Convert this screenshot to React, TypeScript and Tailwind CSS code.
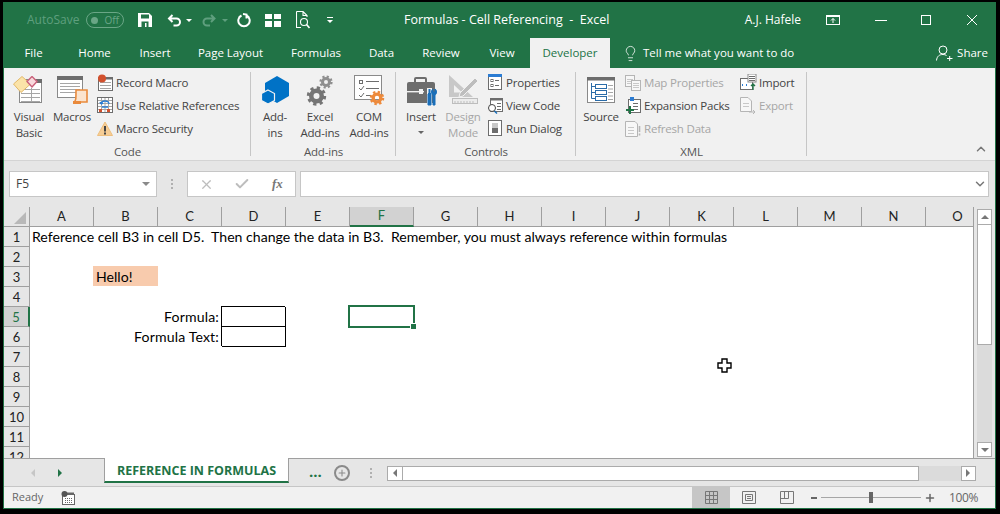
import React from 'react';
import { ChevronDown, ChevronUp, Check, Plus, X, Lightbulb } from 'lucide-react';

const uiFont = { fontFamily: '"Open Sans", "Noto Sans", sans-serif' };

const Gear = ({ cx, cy, r, color }: { cx: number; cy: number; r: number; color: string }) => {
  const c = 2 * Math.PI * (r + 0.5);
  return (
    <g>
      <circle cx={cx} cy={cy} r={r * 0.7} fill="none" stroke={color} strokeWidth={r * 0.6} />
      <circle cx={cx} cy={cy} r={r + 0.5} fill="none" stroke={color} strokeWidth={r * 0.45} strokeDasharray={`${c / 16} ${c / 16}`} />
    </g>
  );
};

const Icon = ({ w, h, className, children }: { w: number; h: number; className?: string; children: React.ReactNode }) => (
  <svg width={w} height={h} viewBox={`0 0 ${w} ${h}`} className={className} fill="none">
    {children}
  </svg>
);

const Lines = ({ x, y, w, n, gap = 4, color = '#a6a6a6' }: { x: number; y: number; w: number; n: number; gap?: number; color?: string }) => (
  <>
    {Array.from({ length: n }).map((_, i) => (
      <line key={i} x1={x} x2={x + w} y1={y + i * gap + 0.5} y2={y + i * gap + 0.5} stroke={color} />
    ))}
  </>
);

const VisualBasicIcon = () => (
  <Icon w={32} h={30}>
    <rect x="6.5" y="3.5" width="22" height="23" fill="#fff" stroke="#8a8a8a" />
    <rect x="17" y="3" width="12" height="4" fill="#6d6d6d" />
    <Lines x={8} y={13} w={19} n={4} />
    <line x1="18.5" y1="12" x2="18.5" y2="26" stroke="#a6a6a6" />
    <path d="M9 0.5 L17.5 8 L8 16.5 L0.5 8 Z" fill="#fbe3a8" stroke="#e2b869" />
    <path d="M19 0.5 L24 5.5 L19 11 L14 5.5 Z" fill="#f8d8dc" stroke="#c9607a" strokeWidth="1.4" />
  </Icon>
);

const MacrosIcon = () => (
  <Icon w={32} h={30}>
    <rect x="1.5" y="0.5" width="25" height="21" fill="#fff" stroke="#8a8a8a" />
    <rect x="1" y="0" width="26" height="4" fill="#6d6d6d" />
    <Lines x={4} y={7} w={20} n={4} gap={3} />
    <path d="M20 14 h11 v12 h-13 c2 -1 2 -3 2 -12 z" fill="#fbe4cf" stroke="#e98a3c" strokeWidth="1.6" />
    <path d="M17 28 h8 v-3 h-8 z" fill="#e98a3c" />
  </Icon>
);

const RecordIcon = () => (
  <Icon w={16} h={17}>
    <rect x="1.5" y="3.5" width="14" height="13" fill="#fff" stroke="#6d6d6d" />
    <rect x="1" y="3" width="15" height="2.5" fill="#6d6d6d" />
    <Lines x={3} y={8} w={11} n={3} gap={3} />
    <circle cx="5" cy="4.5" r="4" fill="#d2512e" />
  </Icon>
);

const RelativeIcon = () => (
  <Icon w={17} h={17}>
    <rect x="0.5" y="0.5" width="15" height="15" fill="#fff" stroke="#6d6d6d" />
    <Lines x={1} y={3} w={14} n={4} gap={3} />
    <path d="M4.5 1 v14 M8 1 v14 M11.5 1 v14" stroke="#a6a6a6" />
    <rect x="2" y="12" width="3" height="3" fill="#d2512e" />
    <rect x="10" y="12" width="3" height="3" fill="#d2512e" />
    <path d="M4 7 a4 3 0 0 1 8 0 M4 7 l-1 -2 M4 7 l2 -1 M5 10 h6" stroke="#2b7cd3" strokeWidth="1.4" />
  </Icon>
);

const WarnIcon = () => (
  <Icon w={16} h={15}>
    <path d="M8 1 L15.5 14.5 H0.5 Z" fill="#f6cd95" stroke="#eebf7e" />
    <rect x="7" y="5" width="2" height="5.5" fill="#444" />
    <rect x="7" y="11.5" width="2" height="2" fill="#444" />
  </Icon>
);

const AddinsIcon = () => (
  <Icon w={28} h={30}>
    <path d="M16 0 L28 7 V20 L16 27 L4 20 V7 Z" fill="#0072c6" />
    <path d="M7 14 L13.5 17.5 V24.5 L7 28 L0.5 24.5 V17.5 Z" fill="#0072c6" stroke="#f1f1f1" strokeWidth="1.2" />
  </Icon>
);

const ExcelAddinsIcon = () => (
  <Icon w={32} h={32}>
    <Gear cx={12.5} cy={22} r={7.5} color="#757575" />
    <Gear cx={22} cy={8} r={5} color="#8f8f8f" />
  </Icon>
);

const ComIcon = () => (
  <Icon w={32} h={32}>
    <rect x="1.5" y="1.5" width="27" height="24" fill="#fff" stroke="#8a8a8a" />
    <rect x="6.5" y="6.5" width="3" height="3" stroke="#6d6d6d" />
    <path d="M6 14 l2 2 l3 -4 M6 21 l2 2 l3 -4" stroke="#6d6d6d" />
    <Lines x={13} y={7} w={13} n={1} color="#6d6d6d" />
    <Lines x={13} y={14} w={13} n={1} color="#6d6d6d" />
    <Lines x={13} y={21} w={5} n={1} color="#6d6d6d" />
    <Gear cx={24} cy={24} r={5.5} color="#ed8a3c" />
  </Icon>
);

const InsertIcon = () => (
  <Icon w={32} h={30}>
    <path d="M10 6 V3 a1 1 0 0 1 1 -1 H20 a1 1 0 0 1 1 1 V6" stroke="#6d6d6d" strokeWidth="2" />
    <path d="M2 8 a2 2 0 0 1 2 -2 H28 a2 2 0 0 1 2 2 V27 H2 Z" fill="#6d6d6d" />
    <rect x="2" y="15" width="17" height="1.4" fill="#f1f1f1" />
    <rect x="14" y="13" width="4" height="5" fill="#f1f1f1" />
    <path d="M22 12 H27 V29 H22 Z" fill="#f1f1f1" />
    <path d="M24 13 v4 l-1 1 v11 h3 v-11 l-1 -1 v-4" fill="#1a6fb9" stroke="#1a6fb9" />
    <path d="M28 13 v3 h2 v-3 c2 1 2 5 0 6 v10 h-2 v-10 c-2 -1 -2 -5 0 -6" fill="#1a6fb9" stroke="#1a6fb9" />
  </Icon>
);

const DesignIcon = () => (
  <Icon w={32} h={32}>
    <path d="M2 1 L2 23 L26 23 Z M7 11 L7 18.5 L15 18.5 Z" fill="#c8c8c8" fillRule="evenodd" />
    <path d="M13 19 L28 4 L31 7 L16 22 L12 23 Z" fill="#bdbdbd" stroke="#f1f1f1" />
    <rect x="5.5" y="24.5" width="25" height="5" fill="#ececec" stroke="#bdbdbd" />
    <path d="M8 27 v2 M11 27 v2 M14 27 v2 M17 27 v2 M20 27 v2 M23 27 v2 M26 27 v2" stroke="#bdbdbd" />
  </Icon>
);

const PropertiesIcon = () => (
  <Icon w={15} h={17} className="ml-px">
    <rect x="0.5" y="1.5" width="13" height="14" fill="#fff" stroke="#6d6d6d" />
    <rect x="0" y="0" width="14" height="3" fill="#2b7cd3" />
    <rect x="3" y="5.5" width="2" height="2" stroke="#6d6d6d" />
    <rect x="3" y="10.5" width="2" height="2" stroke="#6d6d6d" />
    <Lines x={7} y={6} w={4} n={2} gap={5} color="#6d6d6d" />
  </Icon>
);

const ViewCodeIcon = () => (
  <Icon w={16} h={16}>
    <rect x="3.5" y="0.5" width="12" height="13" fill="#fff" stroke="#6d6d6d" />
    <rect x="3" y="0" width="13" height="2.5" fill="#6d6d6d" />
    <Lines x={10} y={5} w={4} n={3} gap={3} color="#6d6d6d" />
    <circle cx="5" cy="10" r="3.5" fill="#fff" stroke="#444" />
    <line x1="7.5" y1="13" x2="10" y2="15.5" stroke="#1a6fb9" strokeWidth="1.5" />
  </Icon>
);

const RunDialogIcon = () => (
  <Icon w={15} h={17} className="ml-px">
    <rect x="0.5" y="0.5" width="13" height="15" fill="#fff" stroke="#6d6d6d" />
    <rect x="4" y="3" width="6" height="5" fill="#c8c8c8" />
    <rect x="4" y="8" width="6" height="5" fill="#6d6d6d" />
  </Icon>
);

const SourceIcon = () => (
  <Icon w={28} h={29}>
    <rect x="0.5" y="1.5" width="27" height="24" fill="#fff" stroke="#8a8a8a" />
    <rect x="0" y="0" width="28" height="3.5" fill="#6d6d6d" />
    <path d="M4.5 6 V21.5 M4.5 9.5 H8 M4.5 15.5 H8 M4.5 21.5 H8" stroke="#2b6ca8" />
    <rect x="8.5" y="7.5" width="11" height="4" fill="#fff" stroke="#2b6ca8" />
    <rect x="8.5" y="13.5" width="11" height="4" fill="#fff" stroke="#2b6ca8" />
    <rect x="8.5" y="19.5" width="11" height="4" fill="#fff" stroke="#2b6ca8" />
    <Lines x={21} y={8} w={5} n={5} gap={3.5} />
  </Icon>
);

const MapPropsIcon = () => (
  <Icon w={16} h={16}>
    <rect x="0.5" y="0.5" width="9" height="11" fill="#f7f7f7" stroke="#b5b5b5" />
    <Lines x={2} y={4} w={6} n={3} gap={2} color="#c8c8c8" />
    <rect x="6.5" y="5.5" width="9" height="10" fill="#f7f7f7" stroke="#b5b5b5" />
    <Lines x={8} y={8} w={6} n={3} gap={2} color="#c8c8c8" />
  </Icon>
);

const ExpansionIcon = () => (
  <Icon w={17} h={18}>
    <rect x="3.5" y="2.5" width="12" height="13" fill="#fff" stroke="#6d6d6d" />
    <rect x="5" y="0" width="4" height="4" fill="#2b7cd3" />
    <Lines x={8} y={6} w={5} n={3} gap={3} color="#6d6d6d" />
    <path d="M5 9 V17 M1 13 H9" stroke="#217346" strokeWidth="2" />
  </Icon>
);

const RefreshIcon = () => (
  <Icon w={16} h={16}>
    <path d="M0.5 0.5 H10 L12.5 3 V15.5 H0.5 Z" fill="#f7f7f7" stroke="#b5b5b5" />
    <Lines x={3} y={6} w={6} n={3} gap={3} color="#c8c8c8" />
    <path d="M14.5 5 V11 M14.5 12.5 V14.5" stroke="#b5b5b5" strokeWidth="1.6" />
  </Icon>
);

const ImportIcon = () => (
  <Icon w={17} h={17}>
    <rect x="0.5" y="4.5" width="12" height="11" fill="#fff" stroke="#6d6d6d" />
    <rect x="8" y="0" width="8" height="8" fill="#fff" stroke="#8a8a8a" />
    <Lines x={9} y={2} w={6} n={3} gap={2} color="#6d6d6d" />
    <path d="M3 10 l-1 1 l1 1 M6 10 l1 1 l-1 1" stroke="#2b7cd3" />
    <path d="M13 16 V10 M11 12 l2 -2 l2 2" stroke="#217346" strokeWidth="1.4" />
  </Icon>
);

const ExportIcon = () => (
  <Icon w={17} h={17}>
    <path d="M0.5 0.5 H8 L11.5 4 V14.5 H0.5 Z" fill="#f7f7f7" stroke="#b5b5b5" />
    <Lines x={3} y={6} w={6} n={2} gap={3} color="#c8c8c8" />
    <path d="M9 15 H15 M13 13 l2 2 l-2 2" stroke="#b5b5b5" />
  </Icon>
);

const LargeButton = ({ icon, lines, width, disabled, caret }: { icon: React.ReactNode; lines: string[]; width: string; disabled?: boolean; caret?: boolean }) => (
  <div className={`${width} flex flex-col items-center shrink-0`}>
    <div className="h-[41px] shrink-0 flex items-end justify-center pb-[3px]">{icon}</div>
    {lines.map((l) => (
      <div key={l} className={`h-[16px] shrink-0 leading-[16px] whitespace-nowrap ${disabled ? 'text-[#a6a6a6]' : 'text-[#444]'}`}>
        {l}
      </div>
    ))}
    {caret && <div className="mt-[6px] w-0 h-0 border-x-[3px] border-x-transparent border-t-[3px] border-t-[#666]" />}
  </div>
);

const SmallButton = ({ icon, label, disabled }: { icon: React.ReactNode; label: string; disabled?: boolean }) => (
  <div className={`h-[23px] flex items-center whitespace-nowrap ${disabled ? 'text-[#a6a6a6]' : 'text-[#444]'}`}>
    <div className="w-[19px] flex items-center shrink-0">{icon}</div>
    {label}
  </div>
);

const RibbonGroup = ({ label, width, children }: { label: string; width: string; children: React.ReactNode }) => (
  <div className={`${width} shrink-0 relative flex flex-col h-full`}>
    <div className="h-[72px] flex">{children}</div>
    <div className="h-[20px] text-center text-[#555] leading-[24px]">{label}</div>
    <div className="absolute right-0 top-[4px] bottom-[4px] w-px bg-[#c6c6c6]" />
  </div>
);

const tabs = [
  { name: 'File', w: 'w-[59px]' },
  { name: 'Home', w: 'w-[63px]' },
  { name: 'Insert', w: 'w-[58px]' },
  { name: 'Page Layout', w: 'w-[93px]' },
  { name: 'Formulas', w: 'w-[78px]' },
  { name: 'Data', w: 'w-[53px]' },
  { name: 'Review', w: 'w-[66px]' },
  { name: 'View', w: 'w-[56px]' },
];

const columns = ['A', 'B', 'C', 'D', 'E', 'F', 'G', 'H', 'I', 'J', 'K', 'L', 'M', 'N', 'O'];
const rows = [1, 2, 3, 4, 5, 6, 7, 8, 9, 10, 11, 12];

const Cell = ({ row, col }: { row: number; col: string }) => {
  if (row === 1 && col === 'A') {
    return (
      <div className="relative pl-[2px] whitespace-pre">
        {'Reference cell B3 in cell D5.  Then change the data in B3.  Remember, you must always reference within formulas'}
      </div>
    );
  }
  if (row === 3 && col === 'B') {
    return <div className="bg-[#f8cbad] -ml-px pl-[3px] h-[20px] -mt-px pt-px">Hello!</div>;
  }
  if (col === 'C' && (row === 5 || row === 6)) {
    return <div className="flex justify-end pr-[3px] whitespace-nowrap tracking-[0.15px]">{row === 5 ? 'Formula:' : 'Formula Text:'}</div>;
  }
  if (col === 'D' && (row === 5 || row === 6)) {
    return <div className="h-[20px] shadow-[-1px_-1px_0_0_#000,inset_-1px_-1px_0_0_#000]" />;
  }
  if (col === 'F' && row === 5) {
    return (
      <div className="relative h-[20px]">
        <div className="absolute -left-[2px] -top-[2px] w-[67px] h-[23px] border-2 border-[#217346]" />
        <div className="absolute left-[60px] top-[16px] w-[5px] h-[5px] bg-[#217346] border border-white box-content" />
      </div>
    );
  }
  return <div className="h-[20px]" />;
};

export default function App() {
  return (
    <div className="w-[1000px] h-[514px] bg-black pt-[2px] pl-[3px] overflow-hidden text-[12px]" style={uiFont}>
      <div className="w-[993px] h-[507px] border-x border-b border-[#217346] bg-[#e6e6e6] flex flex-col">
        {/* Title bar */}
        <div className="h-[36px] bg-[#217346] flex items-center text-white shrink-0 relative">
          <span className="ml-[23px] text-[#5f9f7e]">AutoSave</span>
          <div className="ml-[7px] w-[38px] h-[16px] rounded-full border border-[#6aa686] flex items-center px-[4px] gap-[6px]">
            <span className="w-[7px] h-[7px] rounded-full bg-[#6aa686]" />
            <span className="text-[10px] text-[#6aa686]">Off</span>
          </div>
          <svg width="14" height="14" viewBox="0 0 14 14" className="ml-[14px]" fill="none">
            <path d="M0 0 H11 L14 3 V14 H0 Z" fill="#fff" />
            <rect x="3" y="1.5" width="8" height="4" fill="#217346" />
            <rect x="3.5" y="8.5" width="7" height="5.5" fill="#217346" />
            <rect x="7" y="10" width="1.5" height="4" fill="#fff" />
          </svg>
          <svg width="15" height="13" viewBox="0 0 14 13" className="ml-[15px]" fill="none" stroke="#fff" strokeWidth="2">
            <path d="M5 1 L1.5 4.5 L5 8 M2 4.5 H9 a3.5 3.5 0 0 1 0 7 H6" />
          </svg>
          <span className="ml-[4px] w-0 h-0 border-x-[3px] border-x-transparent border-t-[3px] border-t-white" />
          <svg width="14" height="13" viewBox="0 0 14 13" className="ml-[10px]" fill="none" stroke="#5f9f7e" strokeWidth="2">
            <path d="M9 1 L12.5 4.5 L9 8 M12 4.5 H5 a3.5 3.5 0 0 0 0 7 H8" />
          </svg>
          <span className="ml-[6px] w-0 h-0 border-x-[3px] border-x-transparent border-t-[3px] border-t-[#5f9f7e]" />
          <svg width="14" height="15" viewBox="0 0 14 15" className="ml-[9px]" fill="none" stroke="#fff" strokeWidth="2">
            <path d="M4.5 2.5 a5.7 5.7 0 1 0 5 0 M6 1 L9.5 1.5 V5.5" />
          </svg>
          <svg width="16" height="13" viewBox="0 0 16 13" className="ml-[14px]" fill="#fff">
            <rect x="0" y="0" width="7" height="5" />
            <rect x="9" y="0" width="7" height="5" />
            <rect x="0" y="7" width="7" height="6" />
            <rect x="9" y="7" width="7" height="6" />
          </svg>
          <svg width="14" height="18" viewBox="0 0 14 18" className="ml-[15px]" fill="none" stroke="#fff" strokeWidth="1.1">
            <path d="M0.5 0.5 H7 L11 4.5 V6 M7 0.5 V4.5 H11 M0.5 0.5 V16.5 H5" />
            <circle cx="8" cy="11" r="3.5" />
            <path d="M10.5 13.5 L13.5 17" strokeWidth="1.6" />
          </svg>
          <div className="ml-[17px] flex flex-col items-center gap-[2px]">
            <span className="w-[6px] h-px bg-white" />
            <span className="w-0 h-0 border-x-[3px] border-x-transparent border-t-[3px] border-t-white" />
          </div>
          <span className="absolute left-[400px] text-[12.5px] whitespace-pre">Formulas - Cell Referencing  -  Excel</span>
          <span className="ml-auto whitespace-nowrap">A.J. Hafele</span>
          <svg width="14" height="10" viewBox="0 0 14 10" className="ml-[25px]" fill="none" stroke="#fff">
            <rect x="0.5" y="0.5" width="13" height="9" />
            <path d="M1 1.5 H13 M7 8 V3.5 M5 5.5 L7 3.5 L9 5.5" />
          </svg>
          <svg width="12" height="12" viewBox="0 0 12 12" className="ml-[35px]" stroke="#fff">
            <path d="M0 6.5 H12" />
          </svg>
          <svg width="10" height="10" viewBox="0 0 10 10" className="ml-[34px]" fill="none" stroke="#fff">
            <rect x="0.5" y="0.5" width="9" height="9" />
          </svg>
          <svg width="10" height="10" viewBox="0 0 10 10" className="ml-[36px] mr-[18px]" fill="none" stroke="#fff">
            <path d="M0 0 L10 10 M10 0 L0 10" />
          </svg>
        </div>

        {/* Tabs */}
        <div className="h-[30px] bg-[#217346] flex text-white text-[11.5px] shrink-0 items-stretch">
          {tabs.map((t) => (
            <div key={t.name} className={`${t.w} flex items-center justify-center`}>
              {t.name}
            </div>
          ))}
          <div className="w-[80px] flex items-center justify-center bg-[#f1f1f1] text-[#217346]">Developer</div>
          <Lightbulb size={17} strokeWidth={1.1} className="ml-[12px] self-center" />
          <span className="ml-[4px] self-center whitespace-nowrap">Tell me what you want to do</span>
          <svg width="17" height="16" viewBox="0 0 17 16" className="ml-auto self-center" fill="none" stroke="#fff">
            <circle cx="7" cy="5" r="4" />
            <path d="M0.5 15.5 C1 11 3.5 9.5 7 9.5 C8.5 9.5 9.5 9.8 10.5 10.5 M11 13.5 H16.5 M13.7 11 V16" />
          </svg>
          <span className="ml-[4px] mr-[7px] self-center">Share</span>
        </div>

        {/* Ribbon */}
        <div className="h-[93px] bg-[#f1f1f1] border-b border-[#d4d4d4] flex shrink-0 relative text-[11.5px] tracking-[-0.2px]">
          <RibbonGroup label="Code" width="w-[247px]">
            <LargeButton width="w-[46px] ml-[2px]" lines={['Visual', 'Basic']} icon={<VisualBasicIcon />} />
            <LargeButton width="w-[44px] -ml-[2px]" lines={['Macros']} icon={<MacrosIcon />} />
            <div className="ml-[3px] pt-[3px]">
              <SmallButton icon={<RecordIcon />} label="Record Macro" />
              <SmallButton icon={<RelativeIcon />} label="Use Relative References" />
              <SmallButton icon={<WarnIcon />} label="Macro Security" />
            </div>
          </RibbonGroup>
          <RibbonGroup label="Add-ins" width="w-[145px]">
            <LargeButton width="w-[32px] ml-[8px]" lines={['Add-', 'ins']} icon={<AddinsIcon />} />
            <LargeButton width="w-[50px] ml-[4px]" lines={['Excel', 'Add-ins']} icon={<ExcelAddinsIcon />} />
            <LargeButton width="w-[46px] ml-[1px]" lines={['COM', 'Add-ins']} icon={<ComIcon />} />
          </RibbonGroup>
          <RibbonGroup label="Controls" width="w-[180px]">
            <LargeButton width="w-[42px] ml-[4px]" lines={['Insert']} icon={<InsertIcon />} caret />
            <LargeButton width="w-[42px]" lines={['Design', 'Mode']} icon={<DesignIcon />} disabled />
            <div className="ml-[3px] pt-[3px]">
              <SmallButton icon={<PropertiesIcon />} label="Properties" />
              <SmallButton icon={<ViewCodeIcon />} label="View Code" />
              <SmallButton icon={<RunDialogIcon />} label="Run Dialog" />
            </div>
          </RibbonGroup>
          <RibbonGroup label="XML" width="w-[231px]">
            <LargeButton width="w-[46px] ml-[2px]" lines={['Source']} icon={<SourceIcon />} />
            <div className="ml-[1px] pt-[3px] w-[115px]">
              <SmallButton icon={<MapPropsIcon />} label="Map Properties" disabled />
              <SmallButton icon={<ExpansionIcon />} label="Expansion Packs" />
              <SmallButton icon={<RefreshIcon />} label="Refresh Data" disabled />
            </div>
            <div className="pt-[3px]">
              <SmallButton icon={<ImportIcon />} label="Import" />
              <SmallButton icon={<ExportIcon />} label="Export" disabled />
            </div>
          </RibbonGroup>
          <div className="flex-1 flex items-end justify-end pr-[7px] pb-[4px]">
            <ChevronUp size={14} strokeWidth={2.5} className="text-[#777]" />
          </div>
        </div>

        {/* Formula bar */}
        <div className="h-[46px] flex shrink-0 pt-[10px] pl-[5px] pr-[5px]">
          <div className="w-[148px] h-[26px] bg-white border border-[#c6c6c6] flex items-center justify-between pl-[6px] pr-[6px] text-[#444]">
            <span>F5</span>
            <span className="w-0 h-0 border-x-[4px] border-x-transparent border-t-[4px] border-t-[#8a8a8a]" />
          </div>
          <div className="w-[30px] flex flex-col items-center justify-center gap-[2px] h-[26px]">
            <span className="w-[2px] h-[2px] bg-[#b0b0b0]" />
            <span className="w-[2px] h-[2px] bg-[#b0b0b0]" />
            <span className="w-[2px] h-[2px] bg-[#b0b0b0]" />
          </div>
          <div className="w-[109px] h-[26px] bg-white border border-[#c6c6c6] flex items-center pl-[11px] text-[#bdbdbd]">
            <X size={15} strokeWidth={2} />
            <Check size={16} strokeWidth={3} className="ml-[20px]" />
            <span className="ml-[22px] text-[13px] italic font-bold text-[#777]" style={{ fontFamily: '"Liberation Serif", serif' }}>
              fx
            </span>
          </div>
          <div className="ml-[4px] w-[689px] h-[26px] bg-white border border-[#c6c6c6] flex items-center justify-end pr-[1px]">
            <ChevronDown size={14} strokeWidth={2.5} className="text-[#777]" />
          </div>
        </div>

        {/* Sheet */}
        <div className="h-[251px] flex shrink-0 relative">
          <div className="w-[970px] overflow-hidden flex flex-col border-r border-[#9f9f9f] text-black" style={{ fontFamily: 'Lato, sans-serif' }}>
            <div className="flex h-[20px] shrink-0 text-[13px] text-[#222]">
              <div className="w-[26px] shrink-0 border-r border-b border-[#9f9f9f] relative overflow-hidden">
                <div className="absolute right-[3px] bottom-[2px] w-0 h-0 border-l-[12px] border-l-transparent border-b-[12px] border-b-[#b8b8b8]" />
              </div>
              {columns.map((c) => (
                <div
                  key={c}
                  className={`w-[64px] shrink-0 flex items-center justify-center border-r ${
                    c === 'F' ? 'bg-[#d2d2d2] border-b-2 border-b-[#217346] border-r-[#9f9f9f] text-[#217346]' : 'border-b border-[#9f9f9f]'
                  }`}
                >
                  {c}
                </div>
              ))}
            </div>
            <div className="flex-1 bg-white overflow-hidden text-[14.1px] leading-[20px]">
              {rows.map((r) => (
                <div key={r} className="flex h-[20px]">
                  <div
                    className={`w-[26px] shrink-0 flex items-center justify-center border-b text-[13px] text-[#222] ${
                      r === 5 ? 'bg-[#d2d2d2] border-r-2 border-r-[#217346] border-b-[#9f9f9f] text-[#217346]' : 'bg-[#e6e6e6] border-r border-[#9f9f9f]'
                    }`}
                  >
                    {r}
                  </div>
                  {columns.map((c) => (
                    <div key={c} className="w-[64px] shrink-0">
                      <Cell row={r} col={c} />
                    </div>
                  ))}
                </div>
              ))}
            </div>
          </div>
          {/* Mouse pointer */}
          <svg width="15" height="15" viewBox="0 0 15 15" className="absolute left-[713px] top-[151px]">
            <path d="M5 1 H10 V5 H14 V10 H10 V14 H5 V10 H1 V5 H5 Z" fill="#fff" stroke="#000" strokeWidth="1.4" />
          </svg>
          {/* Vertical scrollbar */}
          <div className="w-[21px] pl-[3px] pr-[3px] pt-[2px] flex flex-col items-stretch bg-[#e6e6e6]">
            <div className="h-[16px] bg-white border border-[#ababab] flex items-center justify-center">
              <span className="w-0 h-0 border-x-[4px] border-x-transparent border-b-[4px] border-b-[#777]" />
            </div>
            <div className="h-[120px] bg-white border-x border-b border-[#ababab]" />
            <div className="flex-1 bg-[#dbdbdb]" />
            <div className="h-[15px] mb-[1px] bg-white border border-[#ababab] flex items-center justify-center">
              <span className="w-0 h-0 border-x-[4px] border-x-transparent border-t-[4px] border-t-[#777]" />
            </div>
          </div>
        </div>

        {/* Sheet tabs */}
        <div className="h-[29px] flex shrink-0 border-b border-[#c6c6c6]">
          <div className="w-[100px] h-[28px] border-t border-[#9f9f9f] flex items-center pl-[27px] gap-[23px]">
            <span className="w-0 h-0 border-y-[4px] border-y-transparent border-r-[4px] border-r-[#c6c6c6]" />
            <span className="w-0 h-0 border-y-[4px] border-y-transparent border-l-[4px] border-l-[#217346]" />
          </div>
          <div className="w-[185px] h-[25px] bg-white border-x border-[#9f9f9f] border-b-2 border-b-[#217346] flex items-center justify-center pt-[4px] font-bold text-[12.5px] text-[#217346] whitespace-nowrap">
            REFERENCE IN FORMULAS
          </div>
          <div className="flex-1 h-[28px] border-t border-[#9f9f9f] flex items-center">
            <span className="ml-[20px] font-bold text-[15px] text-[#217346] leading-none pb-[3px]">...</span>
            <div className="ml-[12px] w-[16px] h-[16px] rounded-full border-2 border-[#8a8a8a] flex items-center justify-center text-[#8a8a8a]">
              <Plus size={10} strokeWidth={2.5} />
            </div>
            <div className="ml-[20px] flex flex-col gap-[2px]">
              <span className="w-[2px] h-[2px] bg-[#b0b0b0]" />
              <span className="w-[2px] h-[2px] bg-[#b0b0b0]" />
              <span className="w-[2px] h-[2px] bg-[#b0b0b0]" />
            </div>
            {/* Horizontal scrollbar */}
            <div className="ml-[15px] w-[589px] h-[15px] flex mt-[1px]">
              <div className="w-[16px] bg-white border border-[#ababab] flex items-center justify-center">
                <span className="w-0 h-0 border-y-[4px] border-y-transparent border-r-[4px] border-r-[#777]" />
              </div>
              <div className="w-[516px] bg-white border-y border-r border-[#ababab]" />
              <div className="flex-1 bg-[#dbdbdb]" />
              <div className="w-[15px] bg-white border border-[#ababab] flex items-center justify-center">
                <span className="w-0 h-0 border-y-[4px] border-y-transparent border-l-[4px] border-l-[#777]" />
              </div>
            </div>
          </div>
        </div>

        {/* Status bar */}
        <div className="h-[21px] bg-[#f1f1f1] flex items-center shrink-0 text-[#666] text-[11px]">
          <span className="ml-[8px]">Ready</span>
          <svg width="14" height="14" viewBox="0 0 14 14" className="ml-[18px]" fill="none">
            <rect x="1.5" y="3.5" width="12" height="10" fill="#fff" stroke="#666" />
            <path d="M2 2.5 H13" stroke="#666" strokeWidth="2" />
            <circle cx="3.5" cy="3" r="3" fill="#555" />
            <path d="M4 7.5 H11 M4 9.5 H11 M4 11.5 H11" stroke="#666" strokeDasharray="1 1" />
          </svg>
          <div className="ml-auto w-[38px] h-[21px] bg-[#c6c6c6] flex items-center justify-center">
            <svg width="13" height="13" viewBox="0 0 13 13" fill="none" stroke="#777">
              <path d="M0.5 0.5 H12.5 V12.5 H0.5 Z M0.5 4.5 H12.5 M0.5 8.5 H12.5 M4.5 0.5 V12.5 M8.5 0.5 V12.5" />
            </svg>
          </div>
          <svg width="14" height="13" viewBox="0 0 14 13" className="ml-[12px]" fill="none" stroke="#777">
            <path d="M0.5 0.5 H13.5 V12.5 H0.5 Z M3.5 3.5 H10.5 V9.5 H3.5 Z M5 5.5 H9 M5 7.5 H9" />
          </svg>
          <svg width="14" height="13" viewBox="0 0 14 13" className="ml-[24px]" fill="none" stroke="#777">
            <path d="M0.5 0.5 H13.5 V12.5 H0.5 Z M0.5 7.5 H8.5 V0.5 M4.5 0.5 V7.5" />
          </svg>
          <span className="ml-[17px] w-[6px] h-[2px] bg-[#666]" />
          <div className="ml-[4px] w-[100px] h-px bg-[#a6a6a6] relative">
            <span className="absolute left-[48px] -top-[5px] w-[4px] h-[11px] bg-[#666]" />
          </div>
          <Plus size={12} strokeWidth={3} className="ml-[3px] text-[#666]" />
          <span className="ml-[13px] mr-[18px] w-[28px] text-[12px] tracking-[-0.4px] text-right">100%</span>
        </div>
      </div>
    </div>
  );
}
